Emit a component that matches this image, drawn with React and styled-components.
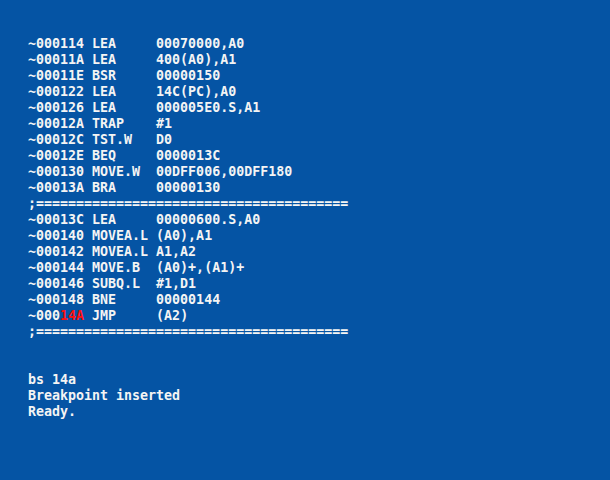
import styled, { createGlobalStyle } from "styled-components"

const Global = createGlobalStyle`
    html, body {
        margin: 0;
        padding: 0;
        background: #0554a4;
    }
`

const Screen = styled.div`
    width: 610px;
    height: 480px;
    background: #0554a4;
    padding: 36px 0 0 28px;
    box-sizing: border-box;
    font-family: "DejaVu Sans Mono", "Liberation Mono", monospace;
    font-weight: bold;
    font-size: 13.3px;
    color: #f4f4f4;
    overflow: hidden;
`

const Line = styled.div`
    height: 16px;
    line-height: 16px;
    white-space: pre;
`

const Hi = styled.span`
    color: #ff1010;
`

const disasm = [
    ["~000114", "LEA", "00070000,A0"],
    ["~00011A", "LEA", "400(A0),A1"],
    ["~00011E", "BSR", "00000150"],
    ["~000122", "LEA", "14C(PC),A0"],
    ["~000126", "LEA", "000005E0.S,A1"],
    ["~00012A", "TRAP", "#1"],
    ["~00012C", "TST.W", "D0"],
    ["~00012E", "BEQ", "0000013C"],
    ["~000130", "MOVE.W", "00DFF006,00DFF180"],
    ["~00013A", "BRA", "00000130"],
    null,
    ["~00013C", "LEA", "00000600.S,A0"],
    ["~000140", "MOVEA.L", "(A0),A1"],
    ["~000142", "MOVEA.L", "A1,A2"],
    ["~000144", "MOVE.B", "(A0)+,(A1)+"],
    ["~000146", "SUBQ.L", "#1,D1"],
    ["~000148", "BNE", "00000144"],
    ["~00014A", "JMP", "(A2)", true],
    null,
]

const rule = ";" + "=".repeat(39)

const App = () => {
    return (
        <>
            <Global />
            <Screen>
                {disasm.map((row, i) => {
                    if (!row) return <Line key={i}>{rule}</Line>
                    const [addr, op, arg, hi] = row
                    const rest = " " + op.padEnd(8) + arg
                    return hi
                        ? <Line key={i}>{addr.slice(0, 4)}<Hi>{addr.slice(4)}</Hi>{rest}</Line>
                        : <Line key={i}>{addr}{rest}</Line>
                })}
                <Line />
                <Line />
                <Line>bs 14a</Line>
                <Line>Breakpoint inserted</Line>
                <Line>Ready.</Line>
            </Screen>
        </>
    )
}

export default App
